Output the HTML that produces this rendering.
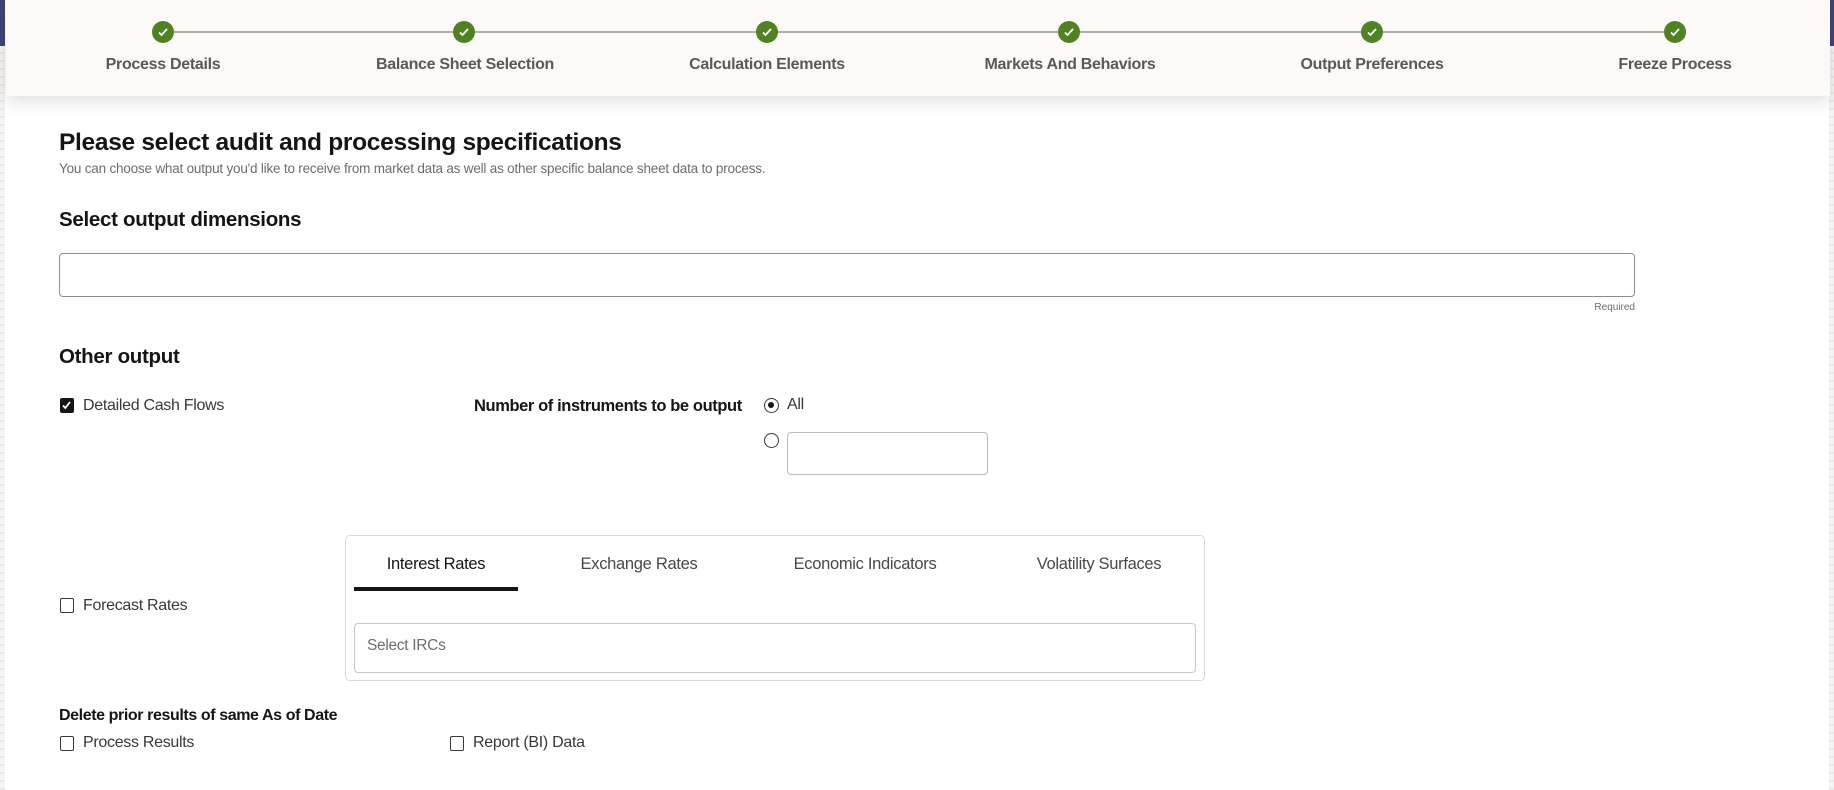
<!DOCTYPE html>
<html><head><meta charset="utf-8"><style>
*{box-sizing:border-box;margin:0;padding:0}
body{width:1834px;height:790px;background:#fff;font-family:"Liberation Sans",sans-serif;position:relative;overflow:hidden;color:#161513}
.abs{position:absolute;white-space:nowrap}
.hdr{position:absolute;left:6px;top:0;width:1824px;height:96px;background:#fbfaf8;box-shadow:0 6px 16px rgba(0,0,0,0.12)}
.line{position:absolute;top:31px;height:2px;background:#b0aeab}
.dot{position:absolute;top:21px;width:22px;height:22px;border-radius:50%;background:#508223}
.dot svg{position:absolute;left:5px;top:5px}
.lbl{position:absolute;top:56px;font-size:16px;font-weight:bold;color:#5b5855;transform:translateX(-50%);letter-spacing:-0.3px;white-space:nowrap}
.cb{position:absolute;width:14px;height:15px;border:1.5px solid #3a3836;border-radius:2px;background:#fff}
.cbt{font-size:16px;color:#3a3836;letter-spacing:-0.3px}
.tab{position:absolute;top:555px;font-size:16.5px;color:#4a4845;transform:translateX(-50%);letter-spacing:-0.3px;white-space:nowrap}
</style></head><body>
<div class="abs" style="left:0;top:0;width:5px;height:46px;background:#3e4475"></div>
<div class="abs" style="left:0;top:46px;width:5px;height:744px;background:repeating-linear-gradient(#f4f3f2 0 6px,#eae9e7 6px 8px)"></div>
<div class="abs" style="left:1829px;top:0;width:5px;height:46px;background:#3e4475"></div>
<div class="abs" style="left:1829px;top:46px;width:5px;height:744px;background:repeating-linear-gradient(#f4f3f2 0 6px,#eae9e7 6px 8px)"></div>
<div class="hdr"></div>
<div class="line" style="left:174px;width:1490px"></div>
<div class="dot" style="left:152px"><svg width="12" height="12" viewBox="0 0 12 12"><path d="M2 6.5l2.5 2.5L10 3" stroke="#fff" stroke-width="1.8" fill="none"/></svg></div>
<div class="dot" style="left:453px"><svg width="12" height="12" viewBox="0 0 12 12"><path d="M2 6.5l2.5 2.5L10 3" stroke="#fff" stroke-width="1.8" fill="none"/></svg></div>
<div class="dot" style="left:756px"><svg width="12" height="12" viewBox="0 0 12 12"><path d="M2 6.5l2.5 2.5L10 3" stroke="#fff" stroke-width="1.8" fill="none"/></svg></div>
<div class="dot" style="left:1058px"><svg width="12" height="12" viewBox="0 0 12 12"><path d="M2 6.5l2.5 2.5L10 3" stroke="#fff" stroke-width="1.8" fill="none"/></svg></div>
<div class="dot" style="left:1361px"><svg width="12" height="12" viewBox="0 0 12 12"><path d="M2 6.5l2.5 2.5L10 3" stroke="#fff" stroke-width="1.8" fill="none"/></svg></div>
<div class="dot" style="left:1664px"><svg width="12" height="12" viewBox="0 0 12 12"><path d="M2 6.5l2.5 2.5L10 3" stroke="#fff" stroke-width="1.8" fill="none"/></svg></div>
<div class="lbl" style="left:163px">Process Details</div>
<div class="lbl" style="left:465px">Balance Sheet Selection</div>
<div class="lbl" style="left:767px">Calculation Elements</div>
<div class="lbl" style="left:1070px">Markets And Behaviors</div>
<div class="lbl" style="left:1372px">Output Preferences</div>
<div class="lbl" style="left:1675px">Freeze Process</div>

<div class="abs" style="left:59px;top:129px;font-size:24.5px;font-weight:bold;letter-spacing:-0.3px">Please select audit and processing specifications</div>
<div class="abs" style="left:59px;top:161px;font-size:13.5px;color:#6f6c69;letter-spacing:-0.2px">You can choose what output you'd like to receive from market data as well as other specific balance sheet data to process.</div>
<div class="abs" style="left:59px;top:208px;font-size:20.5px;font-weight:bold;letter-spacing:-0.3px">Select output dimensions</div>
<div class="abs" style="left:59px;top:253px;width:1576px;height:44px;border:1px solid #8f8d8a;border-radius:4px"></div>
<div class="abs" style="left:1535px;width:100px;text-align:right;top:302px;font-size:10px;color:#6f6c69">Required</div>
<div class="abs" style="left:59px;top:345px;font-size:20.5px;font-weight:bold;letter-spacing:-0.3px">Other output</div>

<div class="cb" style="left:60px;top:398px;background:#161513;border-color:#161513"><svg width="11" height="12" viewBox="0 0 11 12" style="position:absolute;left:0;top:0"><path d="M2 6.5l2.3 2.5L9 3" stroke="#fff" stroke-width="1.8" fill="none"/></svg></div>
<div class="abs cbt" style="left:83px;top:397px">Detailed Cash Flows</div>
<div class="abs" style="left:474px;top:397px;font-size:16.5px;font-weight:bold;color:#161513;letter-spacing:-0.4px">Number of instruments to be output</div>
<div class="abs" style="left:764px;top:398px;width:15px;height:15px;border:1.5px solid #3a3836;border-radius:50%"><div style="position:absolute;left:3px;top:3px;width:6px;height:6px;border-radius:50%;background:#161513"></div></div>
<div class="abs cbt" style="left:787px;top:396px">All</div>
<div class="abs" style="left:764px;top:433px;width:15px;height:15px;border:1.5px solid #3a3836;border-radius:50%"></div>
<div class="abs" style="left:787px;top:432px;width:201px;height:43px;border:1px solid #bdbbb8;border-radius:4px"></div>

<div class="cb" style="left:60px;top:598px"></div>
<div class="abs cbt" style="left:83px;top:597px">Forecast Rates</div>
<div class="abs" style="left:345px;top:535px;width:860px;height:146px;border:1px solid #dcdad7;border-radius:5px"></div>
<div class="tab" style="left:436px;color:#161513">Interest Rates</div>
<div class="tab" style="left:639px">Exchange Rates</div>
<div class="tab" style="left:865px">Economic Indicators</div>
<div class="tab" style="left:1099px">Volatility Surfaces</div>
<div class="abs" style="left:354px;top:587px;width:164px;height:4px;background:#161513"></div>
<div class="abs" style="left:354px;top:623px;width:842px;height:50px;border:1px solid #c9c7c4;border-radius:4px"></div>
<div class="abs" style="left:367px;top:637px;font-size:15.5px;color:#6f6c69;letter-spacing:-0.3px">Select IRCs</div>

<div class="abs" style="left:59px;top:707px;font-size:16px;font-weight:bold;letter-spacing:-0.4px">Delete prior results of same As of Date</div>
<div class="cb" style="left:60px;top:736px"></div>
<div class="abs cbt" style="left:83px;top:734px">Process Results</div>
<div class="cb" style="left:450px;top:736px"></div>
<div class="abs cbt" style="left:473px;top:734px">Report (BI) Data</div>
</body></html>
